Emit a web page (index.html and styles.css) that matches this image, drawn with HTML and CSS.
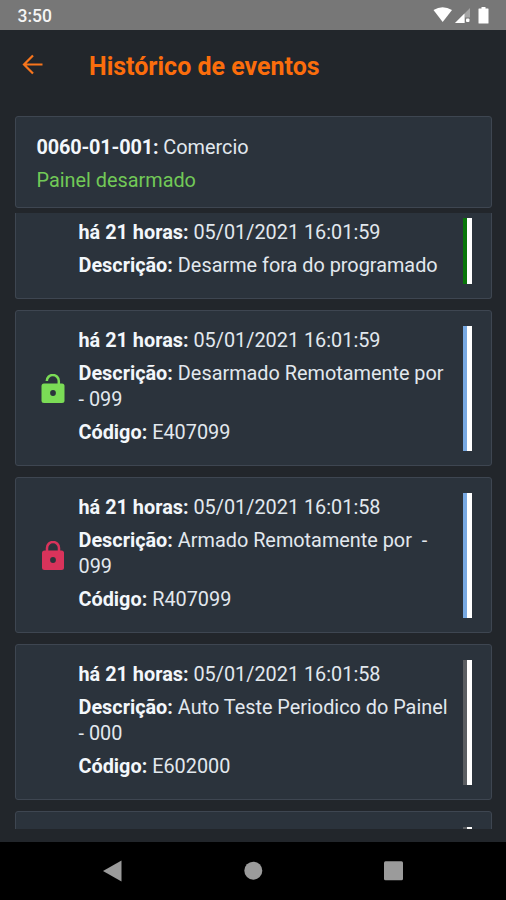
FILE: index.html
```html
<!DOCTYPE html>
<html lang="pt-BR">
<head>
<meta charset="utf-8">
<title>Histórico de eventos</title>
<link rel="stylesheet" href="styles.css">
</head>
<body>
<div class="statusbar">
  <span class="clock">3:50</span>
  <svg class="status-icons" width="58" height="18" viewBox="0 0 58 18">
    <path d="M.5 4Q9.500-1.500 19 4L9.700 16Z" fill="#fff"/>
    <path d="M37 2V11.500H32V17H22Z" fill="#a5a5a5"/>
    <path d="M31.500 7.500V17H22Z" fill="#fff"/>
    <rect x="33" y="12.500" width="3.500" height="3.500" rx="1" fill="#fff"/>
    <path d="M48.500 1h4v1.500h2.500q.5 0 .5 .5v14q0 .5-.5 .5h-9q-.5 0-.5-.5V3q0-.5 .5-.5h2.500z" fill="#fff"/>
  </svg>
</div>
<header class="appbar">
  <svg class="back" width="22" height="22" viewBox="0 0 22 22"><path d="M20.500 10.500H2.500M11 1.500L2 10.500l9 9" fill="none" stroke="#f8751c" stroke-width="2.200"/></svg>
  <h1>Histórico de eventos</h1>
</header>
<main>
  <section class="panel">
    <p><b>0060-01-001:</b> Comercio</p>
    <p class="state">Painel desarmado</p>
  </section>
  <div class="list">
    <article class="event">
      <div class="icon"></div>
      <div class="info">
        <p><b>há 21 horas:</b> 05/01/2021 16:01:59</p>
        <p><b>Descrição:</b> Desarme fora do programado</p>
      </div>
      <div class="bar green"></div>
    </article>
    <article class="event">
      <div class="icon">
        <svg width="24" height="30" viewBox="0 0 24 30"><path d="M5.800 7A6 6 0 0 1 17.800 7V11" fill="none" stroke="#7bdc56" stroke-width="2.500"/><rect x=".5" y="9.500" width="23" height="19.500" rx="2.500" fill="#7bdc56"/><circle cx="12" cy="19" r="2.900" fill="#2b333c"/></svg>
      </div>
      <div class="info">
        <p><b>há 21 horas:</b> 05/01/2021 16:01:59</p>
        <p><b>Descrição:</b> Desarmado Remotamente por<br>- 099</p>
        <p><b>Código:</b> E407099</p>
      </div>
      <div class="bar blue"></div>
    </article>
    <article class="event">
      <div class="icon">
        <svg width="24" height="30" viewBox="0 0 24 30"><path d="M6 11V7A6 6 0 0 1 18 7V11" fill="none" stroke="#d9335b" stroke-width="2.500"/><rect x="1" y="9.500" width="22" height="19.500" rx="2.500" fill="#d9335b"/><circle cx="12" cy="19" r="2.900" fill="#2b333c"/></svg>
      </div>
      <div class="info">
        <p><b>há 21 horas:</b> 05/01/2021 16:01:58</p>
        <p><b>Descrição:</b> Armado Remotamente por&nbsp; -<br>099</p>
        <p><b>Código:</b> R407099</p>
      </div>
      <div class="bar blue"></div>
    </article>
    <article class="event">
      <div class="icon"></div>
      <div class="info">
        <p><b>há 21 horas:</b> 05/01/2021 16:01:58</p>
        <p><b>Descrição:</b> Auto Teste Periodico do Painel<br>- 000</p>
        <p><b>Código:</b> E602000</p>
      </div>
      <div class="bar gray"></div>
    </article>
    <article class="event">
      <div class="icon"></div>
      <div class="info"></div>
      <div class="bar gray"></div>
    </article>
  </div>
</main>
<nav class="navbar">
  <svg width="506" height="58" viewBox="0 0 506 58"><path d="M103 29L121.500 18.500V39.500Z" fill="#9b9b9b"/><circle cx="253.300" cy="28.700" r="9" fill="#9b9b9b"/><rect x="384" y="19.300" width="19" height="19" rx="1.500" fill="#9b9b9b"/></svg>
</nav>
</body>
</html>
```
FILE: styles.css
```css
* { box-sizing: border-box; }
body {
  margin: 0;
  height: 900px;
  display: flex;
  flex-direction: column;
  overflow: hidden;
  background: #22262b;
  color: #e2e8ee;
  font-family: Roboto, sans-serif;
}
p, h1 { margin: 0; }
b { font-weight: 700; color: #f3f7fb; }
.statusbar {
  height: 30px;
  flex: none;
  display: flex;
  justify-content: space-between;
  padding: 6px 15px 0 17.500px;
  background: #777;
}
.clock { font-size: 17.500px; line-height: 20px; font-weight: 500; color: #f5f5f5; }
.appbar {
  height: 86px;
  flex: none;
  display: flex;
  align-items: center;
  padding: 0 22px 16px;
}
.back { margin-right: 45px; }
h1 { font-size: 25px; line-height: 30px; padding-top: 3px; font-weight: 700; color: #fb6d0c; white-space: nowrap; }
main { height: 726px; flex: none; padding: 0 14px 0 15px; }
.panel {
  height: 92px;
  padding: 18px 20.500px;
  margin-bottom: 5px;
  border: 1px solid #3e4651;
  border-radius: 3px;
  background: #2b333c;
}
.panel p, .info p { font-size: 19.850px; line-height: 25.500px; margin-bottom: 7.500px; white-space: nowrap; }
.panel b { letter-spacing: -.15px; }
.panel .state { color: #72c957; }
.list { height: 616px; overflow: hidden; }
.event {
  height: 156px;
  display: flex;
  margin-bottom: 11px;
  padding: 15px 19px 14px 25px;
  border: 1px solid #3e4651;
  border-radius: 3px;
  background: #2b333c;
}
.event:first-child { height: 97px; margin-top: -11px; border-top-color: transparent; }
.icon { width: 37.500px; display: flex; align-items: center; }
.info { flex: 1; padding-top: 2px; }
.bar { width: 9px; border-left: 4px solid; background: #fff; }
.green { border-color: #087508; }
.blue { border-color: #78a9e2; }
.gray { border-color: #5b5e62; }
.navbar { height: 58px; flex: none; background: #000; }
```
